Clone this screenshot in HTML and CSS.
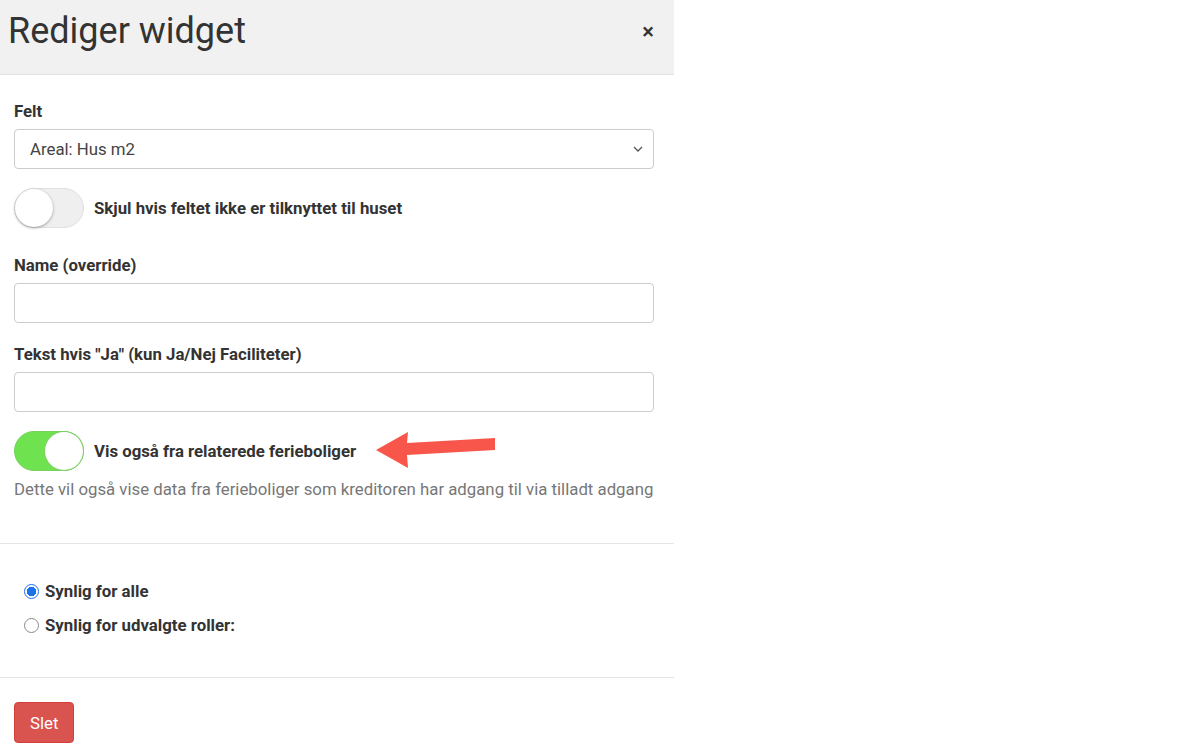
FILE: index.html
```html
<!DOCTYPE html>
<html lang="da">
<head>
<meta charset="utf-8">
<title>Rediger widget</title>
<link rel="stylesheet" href="styles.css">
</head>
<body>
<div class="panel">
  <div class="header">
    <h1 class="title">Rediger widget</h1>
    <span class="close">&#215;</span>
  </div>
  <div class="body">
    <div class="group">
      <label class="label">Felt</label>
      <div class="select">
        <span>Areal: Hus m2</span>
        <svg class="chev" width="10" height="6" viewBox="0 0 10 6"><path d="M1 1 L5 5 L9 1" fill="none" stroke="#555" stroke-width="1.3"/></svg>
      </div>
    </div>
    <div class="toggle-row">
      <span class="toggle"><span class="knob"></span></span>
      <span class="toggle-label">Skjul hvis feltet ikke er tilknyttet til huset</span>
    </div>
    <div class="group">
      <label class="label">Name (override)</label>
      <div class="input"></div>
    </div>
    <div class="group">
      <label class="label">Tekst hvis "Ja" (kun Ja/Nej Faciliteter)</label>
      <div class="input"></div>
    </div>
    <div class="toggle-row on-row">
      <span class="toggle on"><span class="knob"></span></span>
      <span class="toggle-label">Vis også fra relaterede ferieboliger</span>
      <svg class="arrow" width="124" height="40" viewBox="0 0 124 40"><polygon points="4,20 36,2 35,13 123,8 123,20 35,25 36,38" fill="#f9564b"/></svg>
    </div>
    <p class="help">Dette vil også vise data fra ferieboliger som kreditoren har adgang til via tilladt adgang</p>
  </div>
  <div class="section">
    <div class="radio-row"><span class="radio checked"></span><span class="radio-label">Synlig for alle</span></div>
    <div class="radio-row"><span class="radio"></span><span class="radio-label">Synlig for udvalgte roller:</span></div>
  </div>
  <div class="footer">
    <button class="btn-danger">Slet</button>
  </div>
</div>
</body>
</html>
```

FILE: styles.css
```css
html, body {
  margin: 0;
  padding: 0;
  background: #ffffff;
  font-family: Roboto, "Liberation Sans", sans-serif;
  color: #333333;
}
.panel {
  width: 674px;
}
.header {
  height: 74px;
  background: #f1f1f1;
  border-bottom: 1px solid #e3e3e3;
  display: flex;
  align-items: center;
  justify-content: space-between;
  padding: 0 20px 0 8px;
}
.title {
  margin: 0;
  font-size: 36px;
  font-weight: 400;
  color: #333;
  line-height: 1;
  position: relative;
  top: -6px;
}
.close {
  font-size: 22px;
  color: #333;
  font-weight: 500;
  position: relative;
  top: -6px;
}
.body {
  padding: 26px 20px 44px 14px;
}
.group {
  display: flex;
  flex-direction: column;
}
.label {
  font-size: 16.8px;
  font-weight: 700;
  line-height: 20px;
  margin-bottom: 8px;
}
.select, .input {
  height: 40px;
  box-sizing: border-box;
  border: 1px solid #cccccc;
  border-radius: 4px;
  background: #fff;
}
.select {
  display: flex;
  align-items: center;
  justify-content: space-between;
  padding: 0 10px 0 15px;
  font-size: 16.8px;
  color: #444;
}
.toggle-row {
  display: flex;
  align-items: center;
  gap: 10px;
  margin: 19px 0 27px;
}
.on-row {
  margin: 19px 0 8px;
}
.toggle {
  width: 70px;
  height: 40px;
  box-sizing: border-box;
  border-radius: 20px;
  background: #efefef;
  border: 1px solid #e0e0e0;
  position: relative;
  flex: none;
}
.knob {
  position: absolute;
  top: 0;
  left: 0;
  width: 38px;
  height: 38px;
  border-radius: 50%;
  background: #fff;
  box-shadow: 0 1px 3px rgba(0,0,0,0.35);
}
.toggle.on {
  background: #6fe34f;
  border-color: #76d25c;
}
.toggle.on .knob {
  left: auto;
  right: 0;
  box-shadow: 0 0 0 1px #7fcf68;
}
.toggle-label {
  font-size: 16.8px;
  font-weight: 700;
}
.arrow {
  margin-left: 6px;
  position: relative;
  top: -1px;
}
.group + .group {
  margin-top: 21px;
}
.help {
  margin: 0;
  font-size: 16.8px;
  color: #777;
  line-height: 20px;
}
.section {
  border-top: 1px solid #e5e5e5;
  border-bottom: 1px solid #e5e5e5;
  padding: 37px 14px 42px 24px;
  display: flex;
  flex-direction: column;
  gap: 14px;
}
.radio-row {
  display: flex;
  align-items: center;
  gap: 6px;
}
.radio {
  width: 13px;
  height: 13px;
  border-radius: 50%;
  border: 1px solid #8a8a8a;
  background: #fff;
  flex: none;
}
.radio.checked {
  border-color: #1a73e8;
  background: radial-gradient(circle, #1a73e8 0 4.5px, #fff 5px);
}
.radio-label {
  font-size: 16.8px;
  font-weight: 700;
  line-height: 20px;
}
.footer {
  padding: 24px 14px;
}
.btn-danger {
  background: #d9534f;
  color: #fff;
  border: 1px solid #d43f3a;
  border-radius: 4px;
  height: 41px;
  padding: 0 15px;
  font-family: Roboto, "Liberation Sans", sans-serif;
  font-size: 16.8px;
}
```
